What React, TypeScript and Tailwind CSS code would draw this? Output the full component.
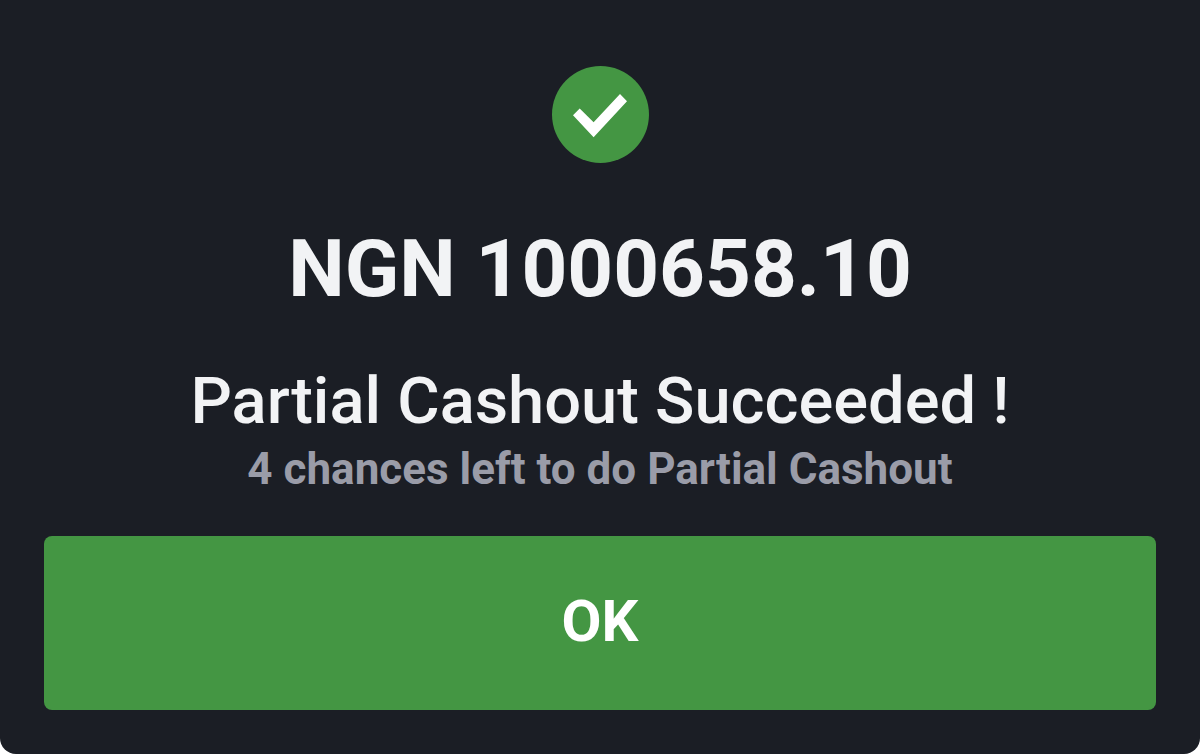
import React from 'react';

const SuccessIcon = () => {
  return (
    <svg className="h-[97px] w-[97px]" viewBox="0 0 97 97" aria-hidden="true">
      <circle cx="48.5" cy="48.5" r="48.5" fill="#449643" />
      <path d="M21 49.3L27.7 42.6L41.6 56.3L68 28L75 35.2L41.6 71.3Z" fill="white" />
    </svg>
  );
};

const App = () => {
  return (
    <div className="min-h-screen bg-white font-['Roboto',sans-serif]">
      <main className="flex min-h-screen flex-col items-center rounded-b-2xl bg-[#1b1e25] px-11 pt-[66px] pb-11 text-center">
        <SuccessIcon />
        <h1 className="mt-[58px] text-[80px] leading-[96px] font-bold text-[#f2f3f5]">NGN 1000658.10</h1>
        <h2 className="mt-11 text-[65px] leading-[80px] font-medium text-[#f2f3f5]">Partial Cashout Succeeded !</h2>
        <p className="text-[44px] leading-[56px] font-bold text-[#9a9ca8]">4 chances left to do Partial Cashout</p>
        <button
          type="button"
          className="mt-[39px] h-[174px] w-full rounded-lg bg-[#449643] pb-1 text-[58px] leading-[72px] font-bold text-white"
        >
          OK
        </button>
      </main>
    </div>
  );
};

export default App;
